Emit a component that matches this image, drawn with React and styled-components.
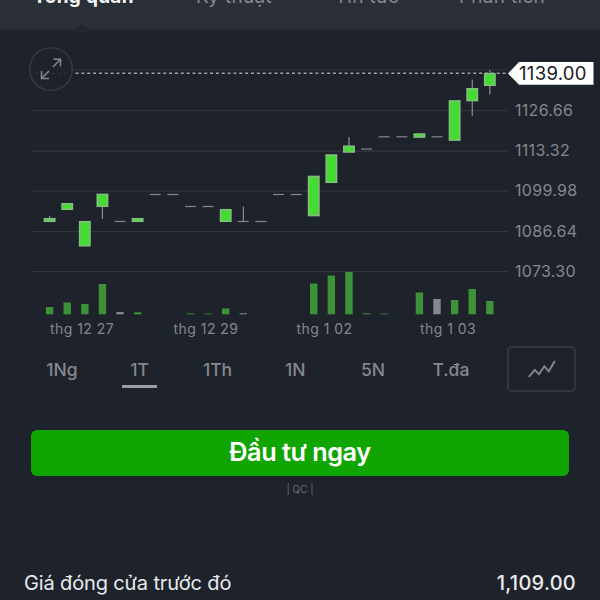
import React from "react";
import styled, { createGlobalStyle } from "styled-components";

const GlobalStyle = createGlobalStyle`
  * { box-sizing: border-box; }
  body { margin: 0; background: #1e222a; overflow: hidden; }
  button { font: inherit; border: 0; padding: 0; background: none; color: inherit; }
`;

const Screen = styled.main`
  width: 600px;
  height: 600px;
  overflow: hidden;
  display: flex;
  flex-direction: column;
  background: #1e222a;
  font-family: Inter, "Liberation Sans", sans-serif;
`;

const Header = styled.nav`
  flex: none;
  height: 29px;
  display: grid;
  grid-template-columns: 167px 134px 132px 138px;
  background: #2b2f38;
  overflow: hidden;
`;

const HeaderTab = styled.button`
  height: 24px;
  margin-top: -15px;
  line-height: 24px;
  font-size: 19px;
  letter-spacing: 0.3px;
  font-weight: ${(p) => (p.$active ? 700 : 400)};
  color: ${(p) => (p.$active ? "#f4f5f6" : "#858890")};
  white-space: nowrap;
`;

const Chart = styled.svg`
  flex: none;
  display: block;
  width: 600px;
  height: 317px;
  overflow: visible;
  font-family: Inter, "Liberation Sans", sans-serif;
`;

const AxisLabel = styled.text`
  fill: #858790;
  font-size: ${(p) => (p.$small ? "14px" : "16px")};
  letter-spacing: ${(p) => (p.$small ? "0.45px" : "0.3px")};
`;

const PriceLabel = styled.text`
  fill: #17191e;
  font-size: 18.5px;
  letter-spacing: 0.3px;
`;

const RangeBar = styled.div`
  flex: none;
  display: flex;
  height: 46px;
  padding: 0 24px 0 23px;
  justify-content: space-between;
`;

const Ranges = styled.div`
  display: grid;
  grid-template-columns: repeat(6, 77.8px);
`;

const RangeButton = styled.button`
  display: flex;
  flex-direction: column;
  align-items: center;
  padding-top: 13px;
  font-size: 17.5px;
  line-height: 21px;
  font-weight: 500;
  letter-spacing: 0;
  color: #858790;

  &::after {
    content: "";
    width: 35px;
    height: 3px;
    margin-top: 5px;
    background: ${(p) => (p.$active ? "#9a9ba3" : "transparent")};
  }
`;

const ChartTypeButton = styled.button`
  width: 69px;
  height: 46px;
  display: grid;
  place-items: center;
  border: 2px solid #33363e;
  border-radius: 5px;
`;

const InvestButton = styled.button`
  flex: none;
  height: 46px;
  margin: 37.5px 31px 0;
  padding-bottom: 2px;
  border-radius: 6px;
  background: #10a502;
  color: #fff;
  font-size: 25.3px;
  font-weight: 600;
  letter-spacing: -0.48px;
`;

const AdNote = styled.div`
  margin-top: 7px;
  text-align: center;
  font-size: 10px;
  line-height: 13px;
  color: #6a6d75;
`;

const StatRow = styled.div`
  display: flex;
  justify-content: space-between;
  margin-top: 74px;
  padding: 0 24px;
  font-size: 20px;
  line-height: 26px;
  color: #e9eaed;
`;

const StatName = styled.span`
  letter-spacing: -0.14px;
`;

const StatValue = styled.span`
  font-weight: 500;
  letter-spacing: 0.25px;
`;

const tabs = ["Tổng quan", "Kỹ thuật", "Tin tức", "Phân tích"];
const ranges = ["1Ng", "1T", "1Th", "1N", "5N", "T.đa"];

const levels = [
  [110.7, "1126.66"],
  [151, "1113.32"],
  [191.2, "1099.98"],
  [231.7, "1086.64"],
  [271.7, "1073.30"],
];

const dates = [
  [82, "thg 12 27"],
  [206, "thg 12 29"],
  [324.5, "thg 1 02"],
  [448, "thg 1 03"],
];

// top and bottom of the body, ends of the wick, top of the volume bar
const candles = [
  { body: [218, 222], wick: [216, 222], vol: 307 },
  { body: [203, 210], vol: 302.5 },
  { body: [221, 246.5], vol: 304 },
  { body: [193.7, 207], wick: [194, 219], vol: 284 },
  { flat: 221.5, vol: 312, gray: true },
  { body: [218, 222], vol: 312.3 },
  { flat: 194.5 },
  { flat: 194.5 },
  { flat: 206.5, vol: 313.4 },
  { flat: 206.5, vol: 313.6 },
  { body: [209, 222], vol: 308.5 },
  { flat: 221.5, wick: [206.5, 222], vol: 313.2, gray: true },
  { flat: 221.5 },
  { flat: 194.5 },
  { flat: 194.5 },
  { body: [175.7, 216.3], vol: 283.5 },
  { body: [154.3, 183], vol: 275.5 },
  { body: [145.5, 152.7], wick: [137, 150], vol: 272 },
  { flat: 149, vol: 313.3 },
  { flat: 136.8, vol: 313.6 },
  { flat: 136.8 },
  { body: [133.3, 137.8], vol: 292.5 },
  { flat: 136.8, vol: 299, gray: true },
  { body: [100.2, 140.8], vol: 300 },
  { body: [88, 101.3], wick: [79.5, 116], vol: 289 },
  { body: [73, 86], wick: [70, 94.5], vol: 301 },
];

const VOLUME_BASE = 314.3;

function Candle({ index, body, wick, flat, vol, gray }) {
  const x = 49.6 + index * 17.61;
  return (
    <g>
      {wick && <line x1={x} x2={x} y1={wick[0]} y2={wick[1]} stroke="#94979b" strokeWidth="1.1" />}
      {flat && <line x1={x - 5.5} x2={x + 5.5} y1={flat} y2={flat} stroke="#84888c" strokeWidth="1.2" />}
      {body && (
        <rect
          x={x - 5.2}
          y={body[0] + 0.7}
          width="10.4"
          height={body[1] - body[0] - 1.4}
          fill="#43dc30"
          stroke="#86bd83"
          strokeWidth="1.5"
        />
      )}
      {vol && (
        <rect
          x={x - 3.7}
          y={vol}
          width="7.4"
          height={VOLUME_BASE - vol}
          fill={gray ? "#85878f" : "#3d9239"}
        />
      )}
    </g>
  );
}

function PriceChart() {
  return (
    <Chart viewBox="0 29 600 317">
      <rect x="0" y="29" width="600" height="4" fill="#22262e" />
      <path d="M74 29.5 L82 24.5 L90 29.5 Z" fill="#22262e" />
      <line x1="32" x2="508" y1="69.7" y2="69.7" stroke="#2d3037" strokeWidth="1" />
      {levels.map(([y, text]) => (
        <g key={text}>
          <line x1="32" x2="508" y1={y} y2={y} stroke="#32353c" strokeWidth="1.3" />
          <AxisLabel x="515" y={y + 4.8}>{text}</AxisLabel>
        </g>
      ))}
      <line x1="75.5" x2="508" y1="73.3" y2="73.3" stroke="#a0a2a7" strokeWidth="1.5" strokeDasharray="3 2.85" />
      {candles.map((c, i) => (
        <Candle key={i} index={i} {...c} />
      ))}
      <circle cx="51" cy="69" r="21.3" fill="#1e222a" stroke="#34373e" strokeWidth="1.6" />
      <line x1="35" x2="69" y1="73.3" y2="73.3" stroke="#32353c" strokeDasharray="3 2.85" />
      <g fill="none" stroke="#85878c" strokeWidth="1.5">
        <path d="M53.5 59.3 H60.5 V66.5 M60.3 59.5 L53 67" />
        <path d="M41.5 71 V78.4 H49 M41.7 78.2 L49 71" />
      </g>
      <path d="M508 73.5 L519 62 H593.5 V84.7 H519 Z" fill="#fff" />
      <PriceLabel x="519" y="80">1139.00</PriceLabel>
      {dates.map(([x, text]) => (
        <AxisLabel key={text} $small x={x} y="333.5" textAnchor="middle">{text}</AxisLabel>
      ))}
    </Chart>
  );
}

export default function App() {
  return (
    <>
      <GlobalStyle />
      <Screen>
        <Header>
          {tabs.map((t, i) => (
            <HeaderTab key={t} $active={i === 0}>{t}</HeaderTab>
          ))}
        </Header>
        <PriceChart />
        <RangeBar>
          <Ranges>
            {ranges.map((r) => (
              <RangeButton key={r} $active={r === "1T"}>{r}</RangeButton>
            ))}
          </Ranges>
          <ChartTypeButton aria-label="Chart type">
            <svg width="30" height="20" viewBox="0 0 30 20" fill="none" stroke="#85878c" strokeWidth="1.9">
              <path d="M1.8 17.8 L7.8 10.8 L12 15.3 L17.3 7.3 L21.8 12.3 L27.8 2" />
            </svg>
          </ChartTypeButton>
        </RangeBar>
        <InvestButton>Đầu tư ngay</InvestButton>
        <AdNote>| QC |</AdNote>
        <StatRow>
          <StatName>Giá đóng cửa trước đó</StatName>
          <StatValue>1,109.00</StatValue>
        </StatRow>
      </Screen>
    </>
  );
}
